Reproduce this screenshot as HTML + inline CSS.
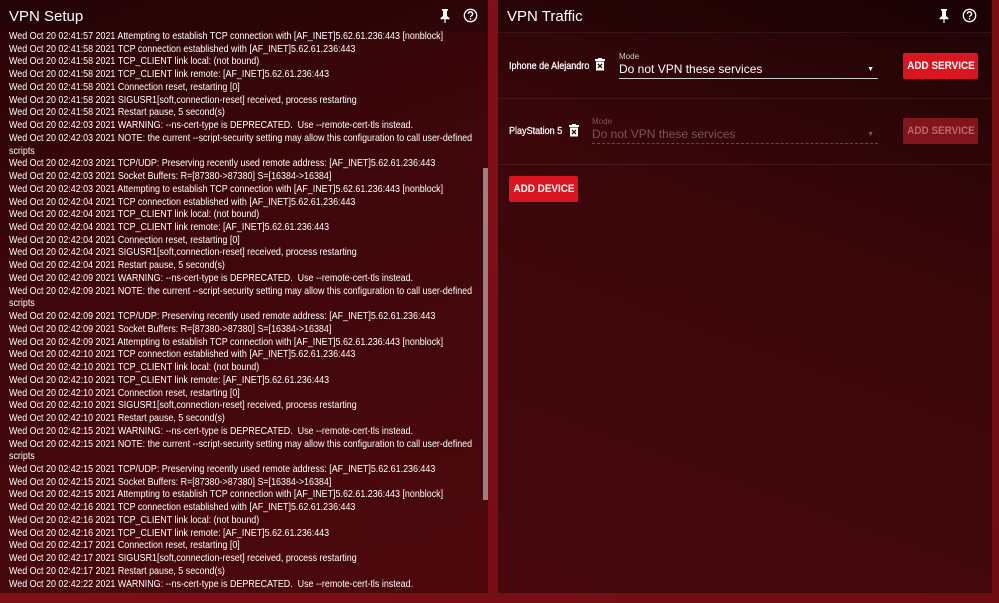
<!DOCTYPE html>
<html><head><meta charset="utf-8"><style>
*{margin:0;padding:0;box-sizing:border-box}
body{width:999px;height:603px;overflow:hidden;background:linear-gradient(135deg,#8a1218,#6e0c12);font-family:"Liberation Sans",sans-serif;color:#fff;position:relative}
.panel{position:absolute;top:0;height:593px;background:linear-gradient(160deg,#2a0407 0%,#3e070b 40%,#4c080d 100%);overflow:hidden}
#l{left:0;width:488px}
#r{left:498px;width:494px;background:linear-gradient(200deg,#1f0305 0%,#3a070a 40%,#47080c 100%)}
.hd{height:32px;font-size:15px;padding:8px 9px;position:relative;background:rgba(0,0,0,0.15)}
#r .hd{height:33px;border-bottom:1px solid rgba(255,255,255,0.07)}
.ic{position:absolute;top:8px}
.log{font-size:10.2px;line-height:12.74px;position:absolute;top:31px;left:9px;white-space:nowrap;transform:scaleX(0.875);transform-origin:0 0}
.sb{position:absolute;left:483px;top:168px;width:5px;height:332px;background:#9a7f81}
.row{position:relative;height:66px;border-bottom:1px solid rgba(255,255,255,0.07)}
.dev{position:absolute;font-size:10.5px;white-space:nowrap;transform:scaleX(0.86);transform-origin:0 0;-webkit-text-stroke:0.25px #fff}
.mode{position:absolute;font-size:8px;color:#ccc}
.sel{position:absolute;font-size:12px;border-bottom:1px solid #ccc;height:17px}
.btn{position:absolute;background:#d9161f;border-radius:2px;height:26px}
.btn span{position:absolute;left:50%;top:0;font-size:11px;font-weight:bold;line-height:26px;white-space:nowrap;transform:translateX(-50%) scaleX(0.9)}
</style></head><body>
<div class="panel" id="l">
<div class="hd">VPN Setup
<svg class="ic" style="left:438px" width="14" height="16" viewBox="0 0 14 16"><path d="M4 1h6v1.5l-1 .5v5l2.5 2v1.2H7.6V15h-1.2v-3.8H2.5V10L5 8V3l-1-.5z" fill="#fff"/></svg>
<svg class="ic" style="left:463px" width="15" height="15" viewBox="0 0 16 16"><circle cx="8" cy="8" r="6.6" fill="none" stroke="#fff" stroke-width="1.4"/><path d="M5.8 6.3a2.2 2.2 0 1 1 3 2c-.6.3-.8.7-.8 1.4" fill="none" stroke="#fff" stroke-width="1.4"/><circle cx="8" cy="11.6" r=".9" fill="#fff"/></svg>
</div>
<div class="log">
Wed Oct 20 02:41:57 2021 Attempting to establish TCP connection with [AF_INET]5.62.61.236:443 [nonblock]<br>
Wed Oct 20 02:41:58 2021 TCP connection established with [AF_INET]5.62.61.236:443<br>
Wed Oct 20 02:41:58 2021 TCP_CLIENT link local: (not bound)<br>
Wed Oct 20 02:41:58 2021 TCP_CLIENT link remote: [AF_INET]5.62.61.236:443<br>
Wed Oct 20 02:41:58 2021 Connection reset, restarting [0]<br>
Wed Oct 20 02:41:58 2021 SIGUSR1[soft,connection-reset] received, process restarting<br>
Wed Oct 20 02:41:58 2021 Restart pause, 5 second(s)<br>
Wed Oct 20 02:42:03 2021 WARNING: --ns-cert-type is DEPRECATED.&nbsp; Use --remote-cert-tls instead.<br>
Wed Oct 20 02:42:03 2021 NOTE: the current --script-security setting may allow this configuration to call user-defined<br>scripts<br>
Wed Oct 20 02:42:03 2021 TCP/UDP: Preserving recently used remote address: [AF_INET]5.62.61.236:443<br>
Wed Oct 20 02:42:03 2021 Socket Buffers: R=[87380-&gt;87380] S=[16384-&gt;16384]<br>
Wed Oct 20 02:42:03 2021 Attempting to establish TCP connection with [AF_INET]5.62.61.236:443 [nonblock]<br>
Wed Oct 20 02:42:04 2021 TCP connection established with [AF_INET]5.62.61.236:443<br>
Wed Oct 20 02:42:04 2021 TCP_CLIENT link local: (not bound)<br>
Wed Oct 20 02:42:04 2021 TCP_CLIENT link remote: [AF_INET]5.62.61.236:443<br>
Wed Oct 20 02:42:04 2021 Connection reset, restarting [0]<br>
Wed Oct 20 02:42:04 2021 SIGUSR1[soft,connection-reset] received, process restarting<br>
Wed Oct 20 02:42:04 2021 Restart pause, 5 second(s)<br>
Wed Oct 20 02:42:09 2021 WARNING: --ns-cert-type is DEPRECATED.&nbsp; Use --remote-cert-tls instead.<br>
Wed Oct 20 02:42:09 2021 NOTE: the current --script-security setting may allow this configuration to call user-defined<br>scripts<br>
Wed Oct 20 02:42:09 2021 TCP/UDP: Preserving recently used remote address: [AF_INET]5.62.61.236:443<br>
Wed Oct 20 02:42:09 2021 Socket Buffers: R=[87380-&gt;87380] S=[16384-&gt;16384]<br>
Wed Oct 20 02:42:09 2021 Attempting to establish TCP connection with [AF_INET]5.62.61.236:443 [nonblock]<br>
Wed Oct 20 02:42:10 2021 TCP connection established with [AF_INET]5.62.61.236:443<br>
Wed Oct 20 02:42:10 2021 TCP_CLIENT link local: (not bound)<br>
Wed Oct 20 02:42:10 2021 TCP_CLIENT link remote: [AF_INET]5.62.61.236:443<br>
Wed Oct 20 02:42:10 2021 Connection reset, restarting [0]<br>
Wed Oct 20 02:42:10 2021 SIGUSR1[soft,connection-reset] received, process restarting<br>
Wed Oct 20 02:42:10 2021 Restart pause, 5 second(s)<br>
Wed Oct 20 02:42:15 2021 WARNING: --ns-cert-type is DEPRECATED.&nbsp; Use --remote-cert-tls instead.<br>
Wed Oct 20 02:42:15 2021 NOTE: the current --script-security setting may allow this configuration to call user-defined<br>scripts<br>
Wed Oct 20 02:42:15 2021 TCP/UDP: Preserving recently used remote address: [AF_INET]5.62.61.236:443<br>
Wed Oct 20 02:42:15 2021 Socket Buffers: R=[87380-&gt;87380] S=[16384-&gt;16384]<br>
Wed Oct 20 02:42:15 2021 Attempting to establish TCP connection with [AF_INET]5.62.61.236:443 [nonblock]<br>
Wed Oct 20 02:42:16 2021 TCP connection established with [AF_INET]5.62.61.236:443<br>
Wed Oct 20 02:42:16 2021 TCP_CLIENT link local: (not bound)<br>
Wed Oct 20 02:42:16 2021 TCP_CLIENT link remote: [AF_INET]5.62.61.236:443<br>
Wed Oct 20 02:42:17 2021 Connection reset, restarting [0]<br>
Wed Oct 20 02:42:17 2021 SIGUSR1[soft,connection-reset] received, process restarting<br>
Wed Oct 20 02:42:17 2021 Restart pause, 5 second(s)<br>
Wed Oct 20 02:42:22 2021 WARNING: --ns-cert-type is DEPRECATED.&nbsp; Use --remote-cert-tls instead.
</div>
<div class="sb"></div>
</div>
<div class="panel" id="r">
<div class="hd">VPN Traffic
<svg class="ic" style="left:439px" width="14" height="16" viewBox="0 0 14 16"><path d="M4 1h6v1.5l-1 .5v5l2.5 2v1.2H7.6V15h-1.2v-3.8H2.5V10L5 8V3l-1-.5z" fill="#fff"/></svg>
<svg class="ic" style="left:464px" width="15" height="15" viewBox="0 0 16 16"><circle cx="8" cy="8" r="6.6" fill="none" stroke="#fff" stroke-width="1.4"/><path d="M5.8 6.3a2.2 2.2 0 1 1 3 2c-.6.3-.8.7-.8 1.4" fill="none" stroke="#fff" stroke-width="1.4"/><circle cx="8" cy="11.6" r=".9" fill="#fff"/></svg>
</div>
<div class="row">
<div class="dev" style="left:11px;top:27px">Iphone de Alejandro</div>
<svg style="position:absolute;left:97px;top:25px" width="10" height="13" viewBox="0 0 10 13"><rect x="0" y="1" width="10" height="2" fill="#fff"/><rect x="3" y="0" width="4" height="1.5" fill="#fff"/><rect x="1" y="3.5" width="8" height="9" fill="#fff"/><path d="M3 6l4 4M7 6l-4 4" stroke="#3a070a" stroke-width="1.3"/></svg>
<div class="mode" style="left:121px;top:19px">Mode</div>
<div class="sel" style="left:121px;top:29px;width:259px">Do not VPN these services<span style="position:absolute;right:4px;top:4px;font-size:7px">▼</span></div>
<div class="btn" style="left:405px;top:20px;width:75px"><span>ADD SERVICE</span></div>
</div>
<div class="row">
<div class="dev" style="left:11px;top:26px">PlayStation 5</div>
<svg style="position:absolute;left:71px;top:25px" width="10" height="13" viewBox="0 0 10 13"><rect x="0" y="1" width="10" height="2" fill="#fff"/><rect x="3" y="0" width="4" height="1.5" fill="#fff"/><rect x="1" y="3.5" width="8" height="9" fill="#fff"/><path d="M3 6l4 4M7 6l-4 4" stroke="#3a070a" stroke-width="1.3"/></svg>
<div class="mode" style="left:94px;top:18px;color:#7a5558">Mode</div>
<div class="sel" style="left:94px;top:28px;width:286px;color:#7a5558;border-bottom:1px dashed #6a4548">Do not VPN these services<span style="position:absolute;right:4px;top:4px;font-size:7px">▼</span></div>
<div class="btn" style="left:405px;top:19px;width:75px;background:#82151b;color:#b46a6e"><span>ADD SERVICE</span></div>
</div>
<div class="btn" style="left:11px;top:176px;width:69px"><span>ADD DEVICE</span></div>
</div>
</body></html>
